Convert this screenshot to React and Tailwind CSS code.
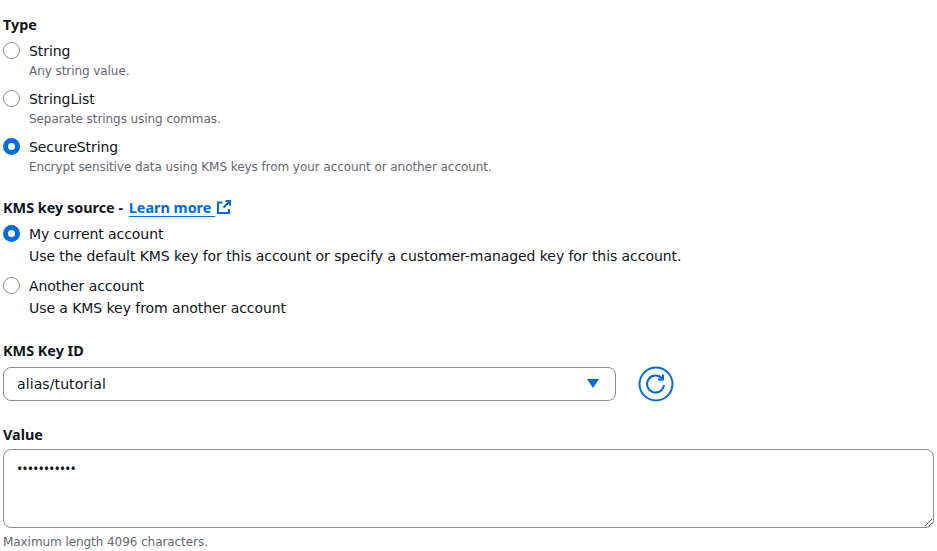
import React from "react";

const heading = "font-['Noto_Sans',sans-serif] text-[14.4px] font-bold text-[#0f141a] h-[22px] leading-[22px] tracking-normal";

function Radio({ checked }) {
  if (checked) {
    return <span className="block mt-[2px] rounded-full border-[5px] border-[#006ce0] bg-white box-border shrink-0 w-[17px] h-[17px]" />;
  }
  return <span className="block mt-[2px] rounded-full border border-[#8c8c94] bg-white box-border shrink-0 w-[17px] h-[17px]" />;
}

function RadioRow({ label, description, checked, className = "", descClass = "text-[12px] text-[#656871] h-[18px] leading-[18px]" }) {
  return (
    <div className={className}>
      <div className="flex items-start h-[22px] leading-[22px] text-[14px] text-[#0f141a]">
        <Radio checked={checked} />
        <span className="ml-[9px]">{label}</span>
      </div>
      <div className={"ml-[26px] " + descClass}>{description}</div>
    </div>
  );
}

const kmsDesc = "text-[14px] text-[#0f141a] h-[22px] leading-[22px]";

export default function App() {
  return (
    <div className="w-[937px] h-[551px] overflow-hidden bg-white pl-[3px] pt-[14px] font-['DejaVu_Sans',sans-serif] tracking-[-0.065px]">
      {/* type */}
      <div className={heading}>Type</div>
      <RadioRow className="mt-[4px]" label="String" description="Any string value." />
      <RadioRow className="mt-[8px]" label="StringList" description="Separate strings using commas." />
      <RadioRow className="mt-[8px]" checked label="SecureString" description="Encrypt sensitive data using KMS keys from your account or another account." />

      {/* kms source */}
      <div className={"mt-[21px] flex items-center " + heading}>
        KMS key source -&nbsp;
        <a className="ml-[2px] text-[#006ce0] underline underline-offset-[3px]">Learn more&nbsp;</a>
        <svg className="ml-[1px] mt-[-2px]" width="16" height="16" viewBox="0 0 16 16" fill="none" stroke="#006ce0" strokeWidth="2">
          <path d="M9.5 2H14v4.5M14 2L7.5 8.5M6.5 3.5H2V14h11V10" />
        </svg>
      </div>
      <RadioRow className="mt-[4px]" checked label="My current account" description="Use the default KMS key for this account or specify a customer-managed key for this account." descClass={kmsDesc} />
      <RadioRow className="mt-[8px]" label="Another account" description="Use a KMS key from another account" descClass={kmsDesc} />

      {/* key id */}
      <div className={"mt-[21px] " + heading}>KMS Key ID</div>
      <div className="mt-[4px] flex items-center">
        <div className="w-[613px] h-[34px] border border-[#8c8c94] rounded-[8px] flex items-center justify-between pl-[13px] pr-[16px] text-[14px] tracking-[0.1px] text-[#0f141a]">
          <span className="pt-[1px]">alias/tutorial</span>
          <svg width="12" height="10" viewBox="0 0 12 10"><path d="M0 0h12L6 9z" fill="#006ce0" /></svg>
        </div>
        <svg className="ml-[22px]" width="36" height="36" viewBox="0 0 36 36" fill="none" stroke="#006ce0" strokeWidth="2">
          <circle cx="18" cy="18" r="16.5" />
          <path d="M24 12.5A8.5 8.5 0 1 0 26 19" />
          <path d="M25 8.5V13.5H20" />
        </svg>
      </div>

      {/* value */}
      <div className={"mt-[22px] " + heading}>Value</div>
      <textarea
        readOnly
        className="block mt-[3px] w-[931px] h-[79px] border border-[#8c8c94] rounded-[8px] px-[13px] pt-[8px] font-['Noto_Sans',sans-serif] text-[14.4px] leading-[22px] text-[#0f141a] outline-none resize-y"
        defaultValue="•••••••••••"
      />
      <div className="mt-[5px] text-[12px] text-[#656871] h-[18px] leading-[18px]">Maximum length 4096 characters.</div>
    </div>
  );
}
